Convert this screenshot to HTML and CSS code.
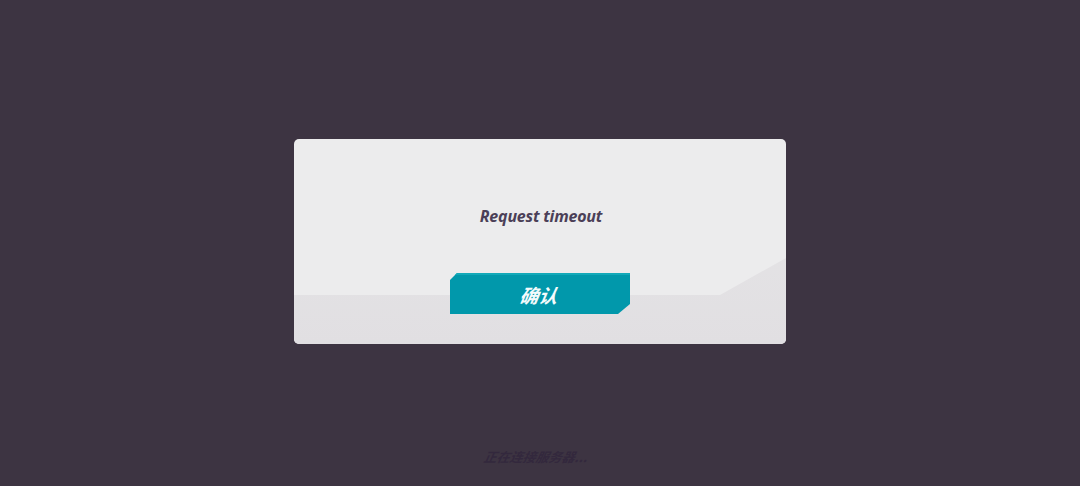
FILE: index.html
```html
<!DOCTYPE html>
<html>
<head>
<meta charset="utf-8">
<link rel="stylesheet" href="styles.css">
</head>
<body>
<div class="screen">
  <div class="dialog">
    <div class="band"></div>
    <div class="content">
      <div class="message">Request timeout</div>
      <div class="btn"><span>确认</span></div>
    </div>
  </div>
  <div class="status">正在连接服务器...</div>
</div>
</body>
</html>
```
FILE: styles.css
```css
html, body {
  margin: 0;
  padding: 0;
  background: #3d3442;
}
.screen {
  width: 1080px;
  height: 486px;
  display: flex;
  flex-direction: column;
  align-items: center;
  padding-top: 139px;
  box-sizing: border-box;
  font-family: "Open Sans", "Noto Sans CJK SC", sans-serif;
}
.dialog {
  position: relative;
  width: 492px;
  height: 205px;
  border-radius: 5px;
  background: #ececed;
  overflow: hidden;
}
.band {
  position: absolute;
  left: 0;
  right: 0;
  bottom: 0;
  height: 110px;
  background: linear-gradient(180deg, #e4e3e5, #e1dfe2);
  clip-path: polygon(0 61px, 426px 61px, 492px 24px, 492px 110px, 0 110px);
}
.content {
  position: relative;
  display: flex;
  flex-direction: column;
  align-items: center;
  padding-top: 66px;
}
.message {
  font-size: 16px;
  font-weight: 700;
  font-style: italic;
  color: #4b3f57;
  line-height: 22px;
  letter-spacing: -0.2px;
  margin-left: 2px;
}
.btn {
  margin-top: 46px;
  width: 180px;
  height: 41px;
  background: #0198ab;
  clip-path: polygon(7px 0, 180px 0, 180px 31px, 168px 41px, 0 41px, 0 7px);
  display: flex;
  align-items: center;
  justify-content: center;
  box-shadow: inset 0 2px 0 #12a9b9;
}
.btn span {
  color: #f4fbfc;
  font-size: 19px;
  font-weight: 700;
  font-style: italic;
  font-family: "Noto Sans CJK SC", sans-serif;
  transform: skewX(-10deg);
  line-height: 1;
  margin-left: -2px;
  margin-top: 1px;
}
.status {
  margin-top: 103px;
  font-size: 13px;
  font-style: italic;
  font-weight: 700;
  color: #33283d;
  font-family: "Noto Sans CJK SC", sans-serif;
  transform: skewX(-12deg);
  line-height: 20px;
  margin-left: -8px;
}
```
